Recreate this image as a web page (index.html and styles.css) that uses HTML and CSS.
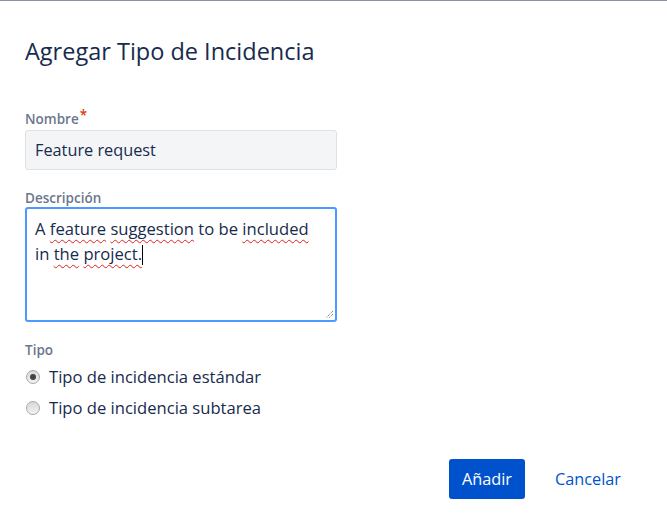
FILE: index.html
```html
<!DOCTYPE html>
<html lang="es">
<head>
<meta charset="utf-8">
<title>Agregar Tipo de Incidencia</title>
<link rel="stylesheet" href="styles.css">
</head>
<body>
<div class="dialog">
  <h1 class="title">Agregar Tipo de Incidencia</h1>
  <form class="form">
    <div class="field">
      <label class="label">Nombre<span class="req">*</span></label>
      <div class="input">Feature request</div>
    </div>
    <div class="field field-desc">
      <label class="label">Descripción</label>
      <div class="textarea">
        <div class="ta-text">A <span class="sp">feature</span> <span class="sp">suggestion</span> to be <span class="sp">included</span> in <span class="sp">the</span> <span class="sp">project.</span><span class="caret"></span></div>
        <svg class="grip" width="10" height="10" viewBox="0 0 10 10"><path d="M9 2 L2 9 M9 5 L5 9" stroke="#555" stroke-width="1" stroke-dasharray="1 1" fill="none"/></svg>
      </div>
    </div>
    <div class="field field-type">
      <label class="label">Tipo</label>
      <div class="radio-row"><span class="radio checked"></span><span class="radio-text">Tipo de incidencia estándar</span></div>
      <div class="radio-row"><span class="radio"></span><span class="radio-text">Tipo de incidencia subtarea</span></div>
    </div>
  </form>
  <div class="footer">
    <button class="btn-primary" type="button">Añadir</button>
    <button class="btn-link" type="button">Cancelar</button>
  </div>
</div>
</body>
</html>
```

FILE: styles.css
```css
html, body {
  margin: 0;
  padding: 0;
  background: #fff;
}
body {
  font-family: "Open Sans", "Noto Sans", sans-serif;
  color: #172b4d;
  border-top: 1px solid #8993a4;
  width: 667px;
  height: 525px;
  overflow: hidden;
}
.dialog {
  padding: 0 0 0 25px;
}
.title {
  margin: 0;
  padding-top: 36px;
  font-size: 23.5px;
  line-height: 28px;
  font-weight: 400;
  color: #172b4d;
}
.form {
  width: 312px;
  margin-top: 46px;
}
.field {
  display: flex;
  flex-direction: column;
}
.label {
  font-size: 13.5px;
  line-height: 16px;
  font-weight: 600;
  color: #6b778c;
  margin-bottom: 3px;
}
.req {
  color: #de350b;
  position: relative;
  top: -4px;
  margin-left: 1px;
}
.input {
  box-sizing: border-box;
  height: 40px;
  background: #f4f5f7;
  border: 1px solid #dfe1e6;
  border-radius: 3px;
  padding: 0 9px;
  font-size: 16.3px;
  line-height: 38px;
  color: #172b4d;
}
.field-desc {
  margin-top: 20px;
}
.field-desc .label {
  margin-bottom: 1px;
}
.textarea {
  position: relative;
  box-sizing: border-box;
  height: 115px;
  border: 2px solid #4c9aff;
  border-radius: 3px;
  padding: 7px 8px;
}
.ta-text {
  font-size: 16.6px;
  line-height: 25px;
  color: #172b4d;
}
.sp {
  text-decoration: underline wavy #e02020;
  text-decoration-thickness: 1px;
  text-underline-offset: 4px;
}
.caret {
  display: inline-block;
  width: 1px;
  height: 20px;
  background: #000;
  vertical-align: -5px;
}
.grip {
  position: absolute;
  right: 1px;
  bottom: 1px;
}
.field-type {
  margin-top: 20px;
}
.field-type .label {
  margin-bottom: 3px;
}
.radio-row {
  display: flex;
  align-items: center;
  height: 31px;
}
.radio {
  box-sizing: border-box;
  width: 14px;
  height: 14px;
  border-radius: 50%;
  border: 1px solid #a8a8a8;
  background: linear-gradient(#d8d8d8, #f2f2f2);
  margin-left: 1px;
  margin-right: 9px;
  position: relative;
}
.radio.checked::after {
  content: "";
  position: absolute;
  left: 3px;
  top: 3px;
  width: 6px;
  height: 6px;
  border-radius: 50%;
  background: #444;
}
.radio-text {
  font-size: 16.6px;
  color: #172b4d;
}
.footer {
  display: flex;
  justify-content: flex-end;
  padding-right: 34px;
  margin-top: 36px;
}
.btn-primary {
  width: 76px;
  height: 40px;
  border: none;
  border-radius: 3px;
  background: #0052cc;
  color: #fff;
  font-family: inherit;
  font-size: 16.3px;
  padding: 0;
}
.btn-link {
  width: 90px;
  height: 40px;
  border: none;
  background: none;
  color: #0052cc;
  font-family: inherit;
  font-size: 16.3px;
  padding: 0;
  margin-left: 18px;
}
```
